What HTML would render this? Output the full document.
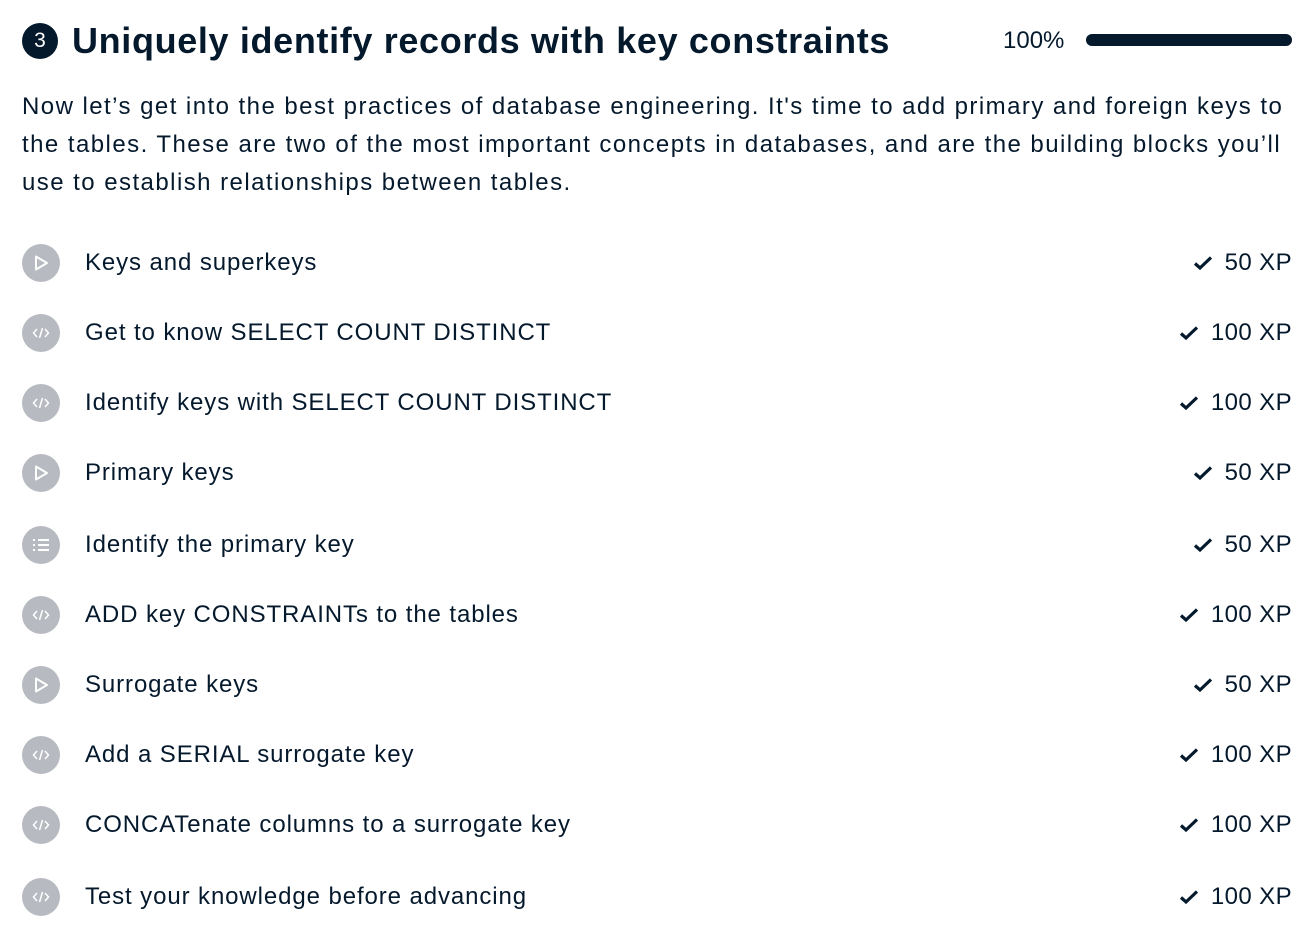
<!DOCTYPE html><html><head><style>
body{margin:0;background:#fff;font-family:"Liberation Sans",sans-serif;color:#05192d;width:1304px;height:928px;overflow:hidden;position:relative}
.t{position:absolute;left:22px;top:20px;display:flex;align-items:center}
.n{width:36px;height:36px;border-radius:50%;background:#05192d;color:#fff;font-size:21px;display:flex;align-items:center;justify-content:center;margin-right:14px}
h1{margin:0;font-size:36px;font-weight:bold;letter-spacing:0.65px}
.pc{position:absolute;left:1003px;top:27px;font-size:24px}
.bar{position:absolute;left:1086px;top:34px;width:206px;height:12px;border-radius:6px;background:#05192d}
p{position:absolute;left:22px;top:88px;width:1290px;margin:0;font-size:24px;line-height:38px;letter-spacing:1.45px;white-space:nowrap}
.r{position:absolute;left:22px;width:1270px;height:38px;display:flex;align-items:center;font-size:24px}
.r>span{letter-spacing:0.9px}
.ic{width:38px;height:38px;border-radius:50%;background:#b7bac0;margin-right:25px;display:flex;align-items:center;justify-content:center}
.x{margin-left:auto;display:flex;align-items:center;letter-spacing:0.4px}
.x svg{margin-right:12px}
</style></head><body>
<div class="t"><div class="n">3</div><h1>Uniquely identify records with key constraints</h1></div>
<div class="pc">100%</div><div class="bar"></div>
<p>Now let’s get into the best practices of database engineering. It's time to add primary and foreign keys to<br>the tables. These are two of the most important concepts in databases, and are the building blocks you’ll<br>use to establish relationships between tables.</p>
<div id="rows"></div>
<script>
var P='<svg width="18" height="18" viewBox="0 0 18 18"><path d="M4 2.5L15 9L4 15.5Z" fill="none" stroke="#fff" stroke-width="2" stroke-linejoin="round"/></svg>';
var C='<svg width="18" height="12" viewBox="0 0 18 12"><path d="M5 2L1.5 6L5 10M13 2L16.5 6L13 10M10.5 1L7.5 11" fill="none" stroke="#fff" stroke-width="1.5"/></svg>';
var L='<svg width="18" height="14" viewBox="0 0 18 14"><path d="M1 2h2M6 2h11M1 7h2M6 7h11M1 12h2M6 12h11" stroke="#fff" stroke-width="2"/></svg>';
var K='<svg width="20" height="16" viewBox="0 0 20 16"><path d="M2 8.5L7 13L18 2.5" fill="none" stroke="#05192d" stroke-width="3.2"/></svg>';
var d=[[P,"Keys and superkeys",50,263],[C,"Get to know SELECT COUNT DISTINCT",100,333],[C,"Identify keys with SELECT COUNT DISTINCT",100,403],[P,"Primary keys",50,473],[L,"Identify the primary key",50,545],[C,"ADD key CONSTRAINTs to the tables",100,615],[P,"Surrogate keys",50,685],[C,"Add a SERIAL surrogate key",100,755],[C,"CONCATenate columns to a surrogate key",100,825],[C,"Test your knowledge before advancing",100,897]];
var h='';d.forEach(function(r){h+='<div class="r" style="top:'+(r[3]-19)+'px"><div class="ic">'+r[0]+'</div><span>'+r[1]+'</span><div class="x">'+K+'<span>'+r[2]+' XP</span></div></div>'});
document.getElementById('rows').innerHTML=h;
</script>
</body></html>
